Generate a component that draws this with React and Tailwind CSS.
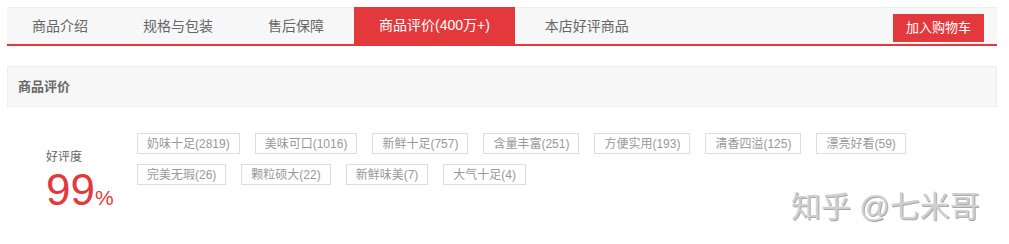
const tabs = ["商品介绍", "规格与包装", "售后保障", "商品评价(400万+)", "本店好评商品"];

const tags = [
  ["奶味十足(2819)", "美味可口(1016)", "新鲜十足(757)", "含量丰富(251)", "方便实用(193)", "清香四溢(125)", "漂亮好看(59)"],
  ["完美无瑕(26)", "颗粒硕大(22)", "新鲜味美(7)", "大气十足(4)"],
];

export default function App() {
  return (
    <div
      className="relative w-[1009px] h-[244px] bg-white pt-[7px] pl-[7px] overflow-hidden"
      style={{ fontFamily: '"Liberation Sans", "Noto Sans CJK SC", sans-serif' }}
    >
      {/* tab bar */}
      <div className="flex w-[990px] h-[39px] bg-[#f7f7f7] border-t border-[#eeeeee] border-b-2 border-b-[#e4393c]">
        <div className="flex gap-[5px]">
          {tabs.map((t, i) => (
            <div
              key={t}
              className={
                i === 3
                  ? "flex items-center px-[25px] -mt-px bg-[#e4393c] text-white text-[14px]"
                  : "flex items-center px-[25px] text-[#666] text-[14px]"
              }
            >
              {t}
            </div>
          ))}
        </div>
        <div className="ml-auto mr-[13px] mt-[6px]">
          <button className="w-[91px] h-[28px] bg-[#e4393c] text-white text-[13px] flex items-center justify-center">
            加入购物车
          </button>
        </div>
      </div>

      {/* section header */}
      <div className="mt-[20px] w-[990px] h-[41px] bg-[#f7f7f7] border border-[#eeeeee] flex items-center pl-[10px]">
        <span className="text-[13px] font-bold text-[#666]">商品评价</span>
      </div>

      {/* rating + tags */}
      <div className="flex mt-[26px]">
        <div className="w-[130px] pl-[39px] pt-[17px]">
          <div className="text-[12px] leading-[14px] text-[#666]">好评度</div>
          <div className="text-[#e4393c] leading-none mt-[4px] whitespace-nowrap">
            <span className="text-[44px]">99</span>
            <span className="text-[21px]">%</span>
          </div>
        </div>
        <div className="flex flex-col gap-[10px]">
          {tags.map((row, r) => (
            <div key={r} className="flex gap-[15px]">
              {row.map((t) => (
                <span
                  key={t}
                  className="h-[21px] px-[9px] border border-[#dddddd] text-[12px] text-[#999] flex items-center whitespace-nowrap"
                >
                  {t}
                </span>
              ))}
            </div>
          ))}
        </div>
      </div>

      {/* watermark */}
      <div
        className="absolute left-[791px] top-[184px] text-[30px] text-[#d0d0d0] whitespace-nowrap"
        style={{ textShadow: "1px 1px 0 #a8a8a8" }}
      >
        知乎 @七米哥
      </div>
    </div>
  );
}
